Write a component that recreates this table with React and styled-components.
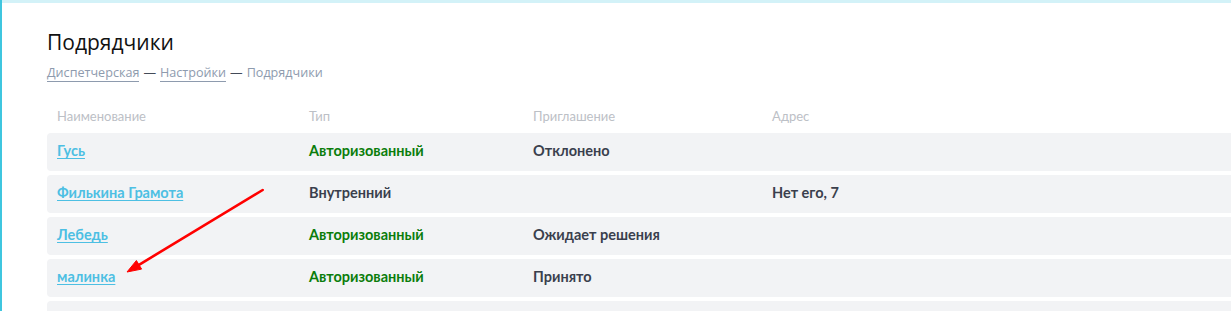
import React from "react";
import styled, { createGlobalStyle } from "styled-components";

const GlobalStyle = createGlobalStyle`
  html, body {
    margin: 0;
    padding: 0;
    background: #ffffff;
    overflow: hidden;
  }
`;

const rows = [
  { name: "Гусь", type: "Авторизованный", auth: true, invite: "Отклонено", address: "" },
  { name: "Филькина Грамота", type: "Внутренний", auth: false, invite: "", address: "Нет его, 7" },
  { name: "Лебедь", type: "Авторизованный", auth: true, invite: "Ожидает решения", address: "" },
  { name: "малинка", type: "Авторизованный", auth: true, invite: "Принято", address: "" },
  { name: "", type: "", auth: false, invite: "", address: "" },
];

function App() {
  return (
    <>
      <GlobalStyle />
      <Page>
        <TopBand />
        <Content>
          <Title>Подрядчики</Title>
          <Breadcrumbs>
            <Crumb>Диспетчерская</Crumb>
            <Dash>—</Dash>
            <Crumb>Настройки</Crumb>
            <Dash>—</Dash>
            <Current>Подрядчики</Current>
          </Breadcrumbs>
          <Table>
            <HeadRow>
              <HeadCell>Наименование</HeadCell>
              <HeadCell>Тип</HeadCell>
              <HeadCell>Приглашение</HeadCell>
              <HeadCell>Адрес</HeadCell>
            </HeadRow>
            {rows.map((r, i) => (
              <Row key={i}>
                <Cell>{r.name && <NameLink>{r.name}</NameLink>}</Cell>
                <Cell $green={r.auth}>{r.type}</Cell>
                <Cell>{r.invite}</Cell>
                <Cell>{r.address}</Cell>
              </Row>
            ))}
          </Table>
        </Content>
        {/* red annotation arrow drawn over the table */}
        <Arrow width="150" height="100" viewBox="0 0 150 100">
          <line x1="142.7" y1="8" x2="19" y2="82.8" stroke="#ff0000" strokeWidth="2.6" strokeLinecap="round" />
          <polygon points="7,90 16.4,78.5 21.6,87.1" fill="#ff0000" stroke="#ff0000" strokeWidth="1" strokeLinejoin="round" />
        </Arrow>
      </Page>
    </>
  );
}

export default App;

const Page = styled.div`
  position: relative;
  width: 1231px;
  height: 311px;
  overflow: hidden;
  border-left: 2px solid #3fc6df;
  box-sizing: border-box;
`;

const TopBand = styled.div`
  height: 3px;
  background: #d3f2f8;
`;

const Content = styled.div`
  padding: 25px 0 0 45px;
`;

const Title = styled.h1`
  margin: 0;
  font-family: "Open Sans", sans-serif;
  font-weight: 400;
  font-size: 21px;
  line-height: 28px;
  color: #111111;
`;

const Breadcrumbs = styled.div`
  display: flex;
  align-items: baseline;
  gap: 4px;
  margin-top: 8px;
  font-family: "Open Sans", sans-serif;
  font-size: 12.6px;
  line-height: 18px;
  color: #8e9bae;
`;

const Crumb = styled.span`
  border-bottom: 1px solid #8e9bae;
  line-height: 17px;
`;

const Dash = styled.span`
  color: #444b58;
`;

const Current = styled.span``;

const Table = styled.div`
  margin-top: 22px;
  display: flex;
  flex-direction: column;
  gap: 4px;
`;

const grid = `
  display: grid;
  grid-template-columns: 252px 224px 239px 1fr;
  padding-left: 10px;
  align-items: center;
  box-sizing: border-box;
`;

const HeadRow = styled.div`
  ${grid};
  height: 24px;
  margin-bottom: 1px;
`;

const HeadCell = styled.div`
  font-family: "Lato", sans-serif;
  font-size: 13px;
  color: #bcc0c6;
`;

const Row = styled.div`
  ${grid};
  height: 38px;
  padding-bottom: 3px;
  background: #f2f3f5;
  border-radius: 4px 0 0 4px;
`;

const Cell = styled.div`
  font-family: "Lato", sans-serif;
  font-weight: 700;
  font-size: 14.5px;
  color: ${(p) => (p.$green ? "#0b7d0b" : "#3a3f4d")};
`;

const NameLink = styled.a`
  color: #4dbfe3;
  text-decoration: underline;
  text-underline-offset: 2px;
  cursor: pointer;
`;

const Arrow = styled.svg`
  position: absolute;
  left: 118px;
  top: 182px;
`;
